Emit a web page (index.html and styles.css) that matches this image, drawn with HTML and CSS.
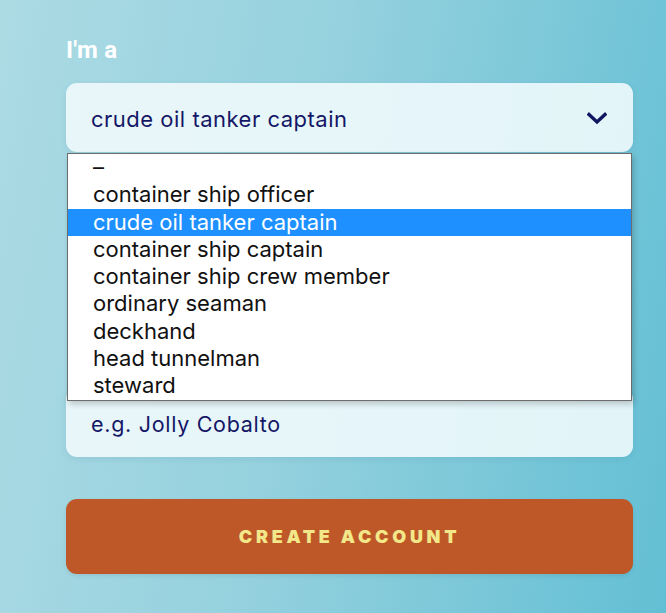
FILE: index.html
```
<!DOCTYPE html>
<html>
<head>
<meta charset="utf-8">
<link rel="stylesheet" href="styles.css">
</head>
<body>
<main class="form">
  <div class="field">
    <label class="label">I'm a</label>
    <div class="select">
      <span class="select-value">crude oil tanker captain</span>
      <svg class="chevron" width="20" height="13" viewBox="0 0 20 13"><path d="M2 2.5 L10 10 L18 2.5" fill="none" stroke="#121560" stroke-width="3.4" stroke-linecap="square" stroke-linejoin="miter"/></svg>
    </div>
    <ul class="dropdown">
      <li>–</li>
      <li>container ship officer</li>
      <li class="selected">crude oil tanker captain</li>
      <li>container ship captain</li>
      <li>container ship crew member</li>
      <li>ordinary seaman</li>
      <li>deckhand</li>
      <li>head tunnelman</li>
      <li>steward</li>
    </ul>
  </div>
  <div class="field field-ship">
    <div class="input">
      <span class="placeholder">e.g. Jolly Cobalto</span>
    </div>
  </div>
  <button class="submit">CREATE ACCOUNT</button>
</main>
</body>
</html>
```
FILE: styles.css
```
html, body {
  margin: 0;
  padding: 0;
}
body {
  width: 666px;
  height: 613px;
  overflow: hidden;
  background: linear-gradient(100deg, #acdbe4 0%, #95d1de 45%, #63bfd4 100%);
  font-family: "Inter", "Liberation Sans", sans-serif;
}
.form {
  padding: 35px 33px 0 66px;
  display: flex;
  flex-direction: column;
}
.field {
  position: relative;
  display: flex;
  flex-direction: column;
}
.label {
  font-family: Roboto, "Liberation Sans", sans-serif;
  font-weight: 700;
  font-size: 24px;
  line-height: 30px;
  letter-spacing: 0.2px;
  color: #ffffff;
  margin-bottom: 18px;
}
.select, .input {
  height: 69px;
  box-sizing: border-box;
  border-radius: 11px;
  background: rgba(240, 249, 252, 0.9);
  box-shadow: 0 2px 6px rgba(40, 110, 130, 0.12);
  display: flex;
  align-items: center;
  padding: 0 26px 0 25px;
}
.select {
  justify-content: space-between;
}
.select-value {
  font-size: 22px;
  letter-spacing: 0.5px;
  color: #141766;
  padding-top: 2px;
}
.chevron {
  display: block;
  margin-top: 2px;
}
.field-ship {
  margin-top: 236px;
}
.placeholder {
  font-size: 21.5px;
  letter-spacing: 0.7px;
  color: #141766;
  margin-top: 2px;
}
.dropdown {
  position: absolute;
  left: 1px;
  top: 118px;
  width: 565px;
  height: 248px;
  box-sizing: border-box;
  margin: 0;
  padding: 0;
  list-style: none;
  background: #ffffff;
  border: 1px solid #6d6d6d;
  box-shadow: 2px 3px 6px rgba(0, 0, 0, 0.2);
  z-index: 2;
}
.dropdown li {
  height: 27.3px;
  line-height: 27px;
  padding-left: 25px;
  font-size: 22px;
  color: #111111;
  white-space: nowrap;
}
.dropdown li.selected {
  background: #1e90ff;
  color: #ffffff;
}
.submit {
  margin-top: 42px;
  height: 75px;
  border: none;
  border-radius: 11px;
  background: #bf5828;
  color: #f2e88a;
  font-family: Inter, "Liberation Sans", sans-serif;
  font-weight: 900;
  font-size: 18px;
  letter-spacing: 3.7px;
  box-shadow: 0 2px 4px rgba(0, 0, 0, 0.08);
}
```
